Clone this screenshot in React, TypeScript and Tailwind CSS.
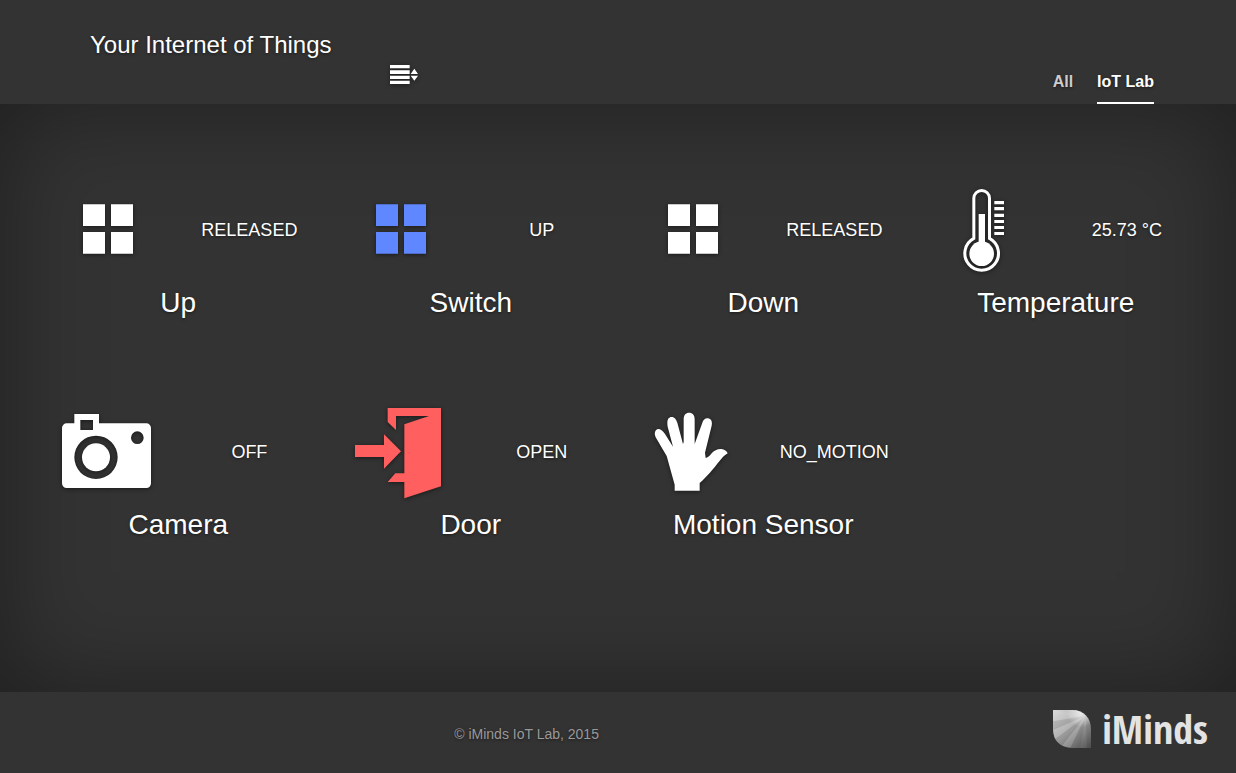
import type { ReactNode } from "react";

const textShadow = "[text-shadow:0_1px_3px_rgba(0,0,0,0.5)]";

function Icon({ viewBox, color, children }: { viewBox: string; color?: string; children: ReactNode }) {
  return (
    <svg
      viewBox={viewBox}
      aria-hidden="true"
      className={`size-[90px] overflow-visible fill-current drop-shadow-[0_1px_2px_rgba(0,0,0,0.5)] ${color ?? "text-white"}`}
    >
      {children}
    </svg>
  );
}

function Squares({ color }: { color?: string }) {
  return (
    <Icon viewBox="39 15 270 270" color={color}>
      <path d="M105 73h66v65h-66zM189 73h66v65h-66zM105 156h66v65h-66zM189 156h66v65h-66z" />
    </Icon>
  );
}

function Thermometer() {
  return (
    <Icon viewBox="-4 15 270 270">
      <path
        d="M100.500 55a23.500 23.500 0 0 1 47 0V175.300A50.500 50.500 0 1 1 100.500 175.300Z"
        fill="none"
        stroke="currentColor"
        strokeWidth="9"
      />
      <circle cx="124" cy="221" r="37" />
      <path d="M115 102h19v90h-19zM162 63h29v10h-29zM162 81h29v10h-29zM162 101h29v10h-29zM162 120h29v9h-29zM162 138h29v9h-29zM162 156h29v9h-29z" />
    </Icon>
  );
}

function Camera() {
  return (
    <Icon viewBox="33 21 270 270">
      <path
        fillRule="evenodd"
        d="M73 42h74v28h142a14 14 0 0 1 14 14v166a14 14 0 0 1-14 14H50a14 14 0 0 1-14-14V84a14 14 0 0 1 14-14h23zM91 60v30h38V60zM73 172a65 65 0 1 0 130 0a65 65 0 1 0-130 0zM243 113a19 19 0 1 0 38 0a19 19 0 1 0-38 0z"
      />
      <circle cx="138" cy="172" r="42" />
    </Icon>
  );
}

function Door() {
  return (
    <Icon viewBox="42 21 270 270" color="text-[#ff5f5f]">
      <path d="M143 24H303V259L193 295V246H143L166 220H193V73L267 48H168V90L143 66ZM45 135H132V103L183 154L132 206V171H45Z" />
    </Icon>
  );
}

function Hand() {
  return (
    <Icon viewBox="18 21 270 270">
      <path d="M104 272V254L80 168L47 112C40 96 48 86 57 87C65 89 71 96 75 102L99 140L83 80C80 62 84 51 95 51C104 51 108 58 112 68L129 132L131 126V58C131 44 138 38 147 38C158 38 164 45 164 58V132L187 68C190 58 197 53 205 55C215 57 217 66 215 77L195 158L197 174C205 172 209 168 215 160C222 151 234 146 244 147C253 148 261 154 263 160C252 166 246 174 238 184C222 204 200 232 179 249V272Z" />
    </Icon>
  );
}

const items = [
  { name: "Up", value: "RELEASED", icon: <Squares /> },
  { name: "Switch", value: "UP", icon: <Squares color="text-[#5f87ff]" /> },
  { name: "Down", value: "RELEASED", icon: <Squares /> },
  { name: "Temperature", value: "25.73 °C", icon: <Thermometer /> },
  { name: "Camera", value: "OFF", icon: <Camera /> },
  { name: "Door", value: "OPEN", icon: <Door /> },
  { name: "Motion Sensor", value: "NO_MOTION", icon: <Hand /> },
];

function LogoMark() {
  return (
    <svg viewBox="0 0 114 114" className="size-[38px]" aria-hidden="true">
      <defs>
        <linearGradient id="leaf" x1="0.1" y1="0" x2="0.9" y2="1">
          <stop offset="0" stopColor="#d2d2d2" />
          <stop offset="0.5" stopColor="#a6a6a6" />
          <stop offset="1" stopColor="#5a5a5a" />
        </linearGradient>
        <radialGradient id="glow" cx="0.75" cy="0.05" r="0.4">
          <stop offset="0" stopColor="#fff" stopOpacity="0.8" />
          <stop offset="1" stopColor="#fff" stopOpacity="0" />
        </radialGradient>
        <clipPath id="leafShape">
          <path d="M0 0H58C92 0 114 24 114 58V114H58C22 114 0 92 0 58Z" />
        </clipPath>
      </defs>
      <g clipPath="url(#leafShape)">
        <path fill="url(#leaf)" d="M0 0h114v114H0z" />
        <path fill="#fff" fillOpacity="0.1" d="M98 18L0 0V34ZM98 18L0 60V92ZM98 18L22 114H52Z" />
        <path fill="#000" fillOpacity="0.08" d="M98 18L0 34V60ZM98 18L0 92V114H22ZM98 18L52 114H82ZM98 18L102 114H114V40Z" />
        <path fill="url(#glow)" d="M0 0h114v114H0z" />
      </g>
    </svg>
  );
}

export default function App() {
  return (
    <div
      className={`flex min-h-screen flex-col bg-[#333] font-["Liberation_Sans",Arial,sans-serif] text-white ${textShadow}`}
    >
      <header className="flex h-[104px] items-stretch pr-[82px] pl-[90px]">
        <h1 className="mr-[58px] pt-[29px] text-2xl leading-8">Your Internet of Things</h1>
        <button type="button" aria-label="Choose list" className="mt-[65px] self-start">
          <svg viewBox="960 135 84 57" className="h-[19px] w-7 fill-current drop-shadow-[0_1px_2px_rgba(0,0,0,0.5)]">
            <path d="M960 135h59v10h-59zM960 151h59v11h-59zM960 167h59v10h-59zM960 182h59v10h-59zM1022 162l11-16 11 16zM1022 167h22l-11 15z" />
          </svg>
        </button>
        <nav className="ml-auto flex items-end gap-6 text-base leading-5 font-bold">
          <a href="#all" className="border-b-2 border-transparent pb-2.5 text-[#ccc]">
            All
          </a>
          <a href="#iot-lab" aria-current="page" className="border-b-2 border-white pb-2.5">
            IoT Lab
          </a>
        </nav>
      </header>

      <main className="flex-1 pt-[81px] pb-20 shadow-[inset_0_0_100px_rgba(0,0,0,0.4)]">
        <ul className="mx-auto grid max-w-[1170px] grid-cols-4 gap-y-[84px]">
          {items.map((item) => (
            <li key={item.name}>
              <div className="grid grid-cols-2 items-center">
                <div className="flex justify-center">{item.icon}</div>
                <p className="pr-1.5 text-center text-lg leading-6">{item.value}</p>
              </div>
              <h2 className="mt-2 pr-0.5 text-center text-[28px] leading-10">{item.name}</h2>
            </li>
          ))}
        </ul>
      </main>

      <footer className="flex h-[81px] items-center pr-7">
        <p className="flex-1 pt-0.5 text-center text-sm text-[#999]">© iMinds IoT Lab, 2015</p>
        <a href="#iminds" className="flex items-center gap-[11px] pb-2 text-[#e3e3e3] [text-shadow:none]">
          <LogoMark />
          <span className='font-["Noto_Sans_ExtraCondensed","Open_Sans_Condensed","Roboto_Condensed","Liberation_Sans_Narrow",sans-serif] text-[40px] leading-none font-bold'>
            iMinds
          </span>
        </a>
      </footer>
    </div>
  );
}
